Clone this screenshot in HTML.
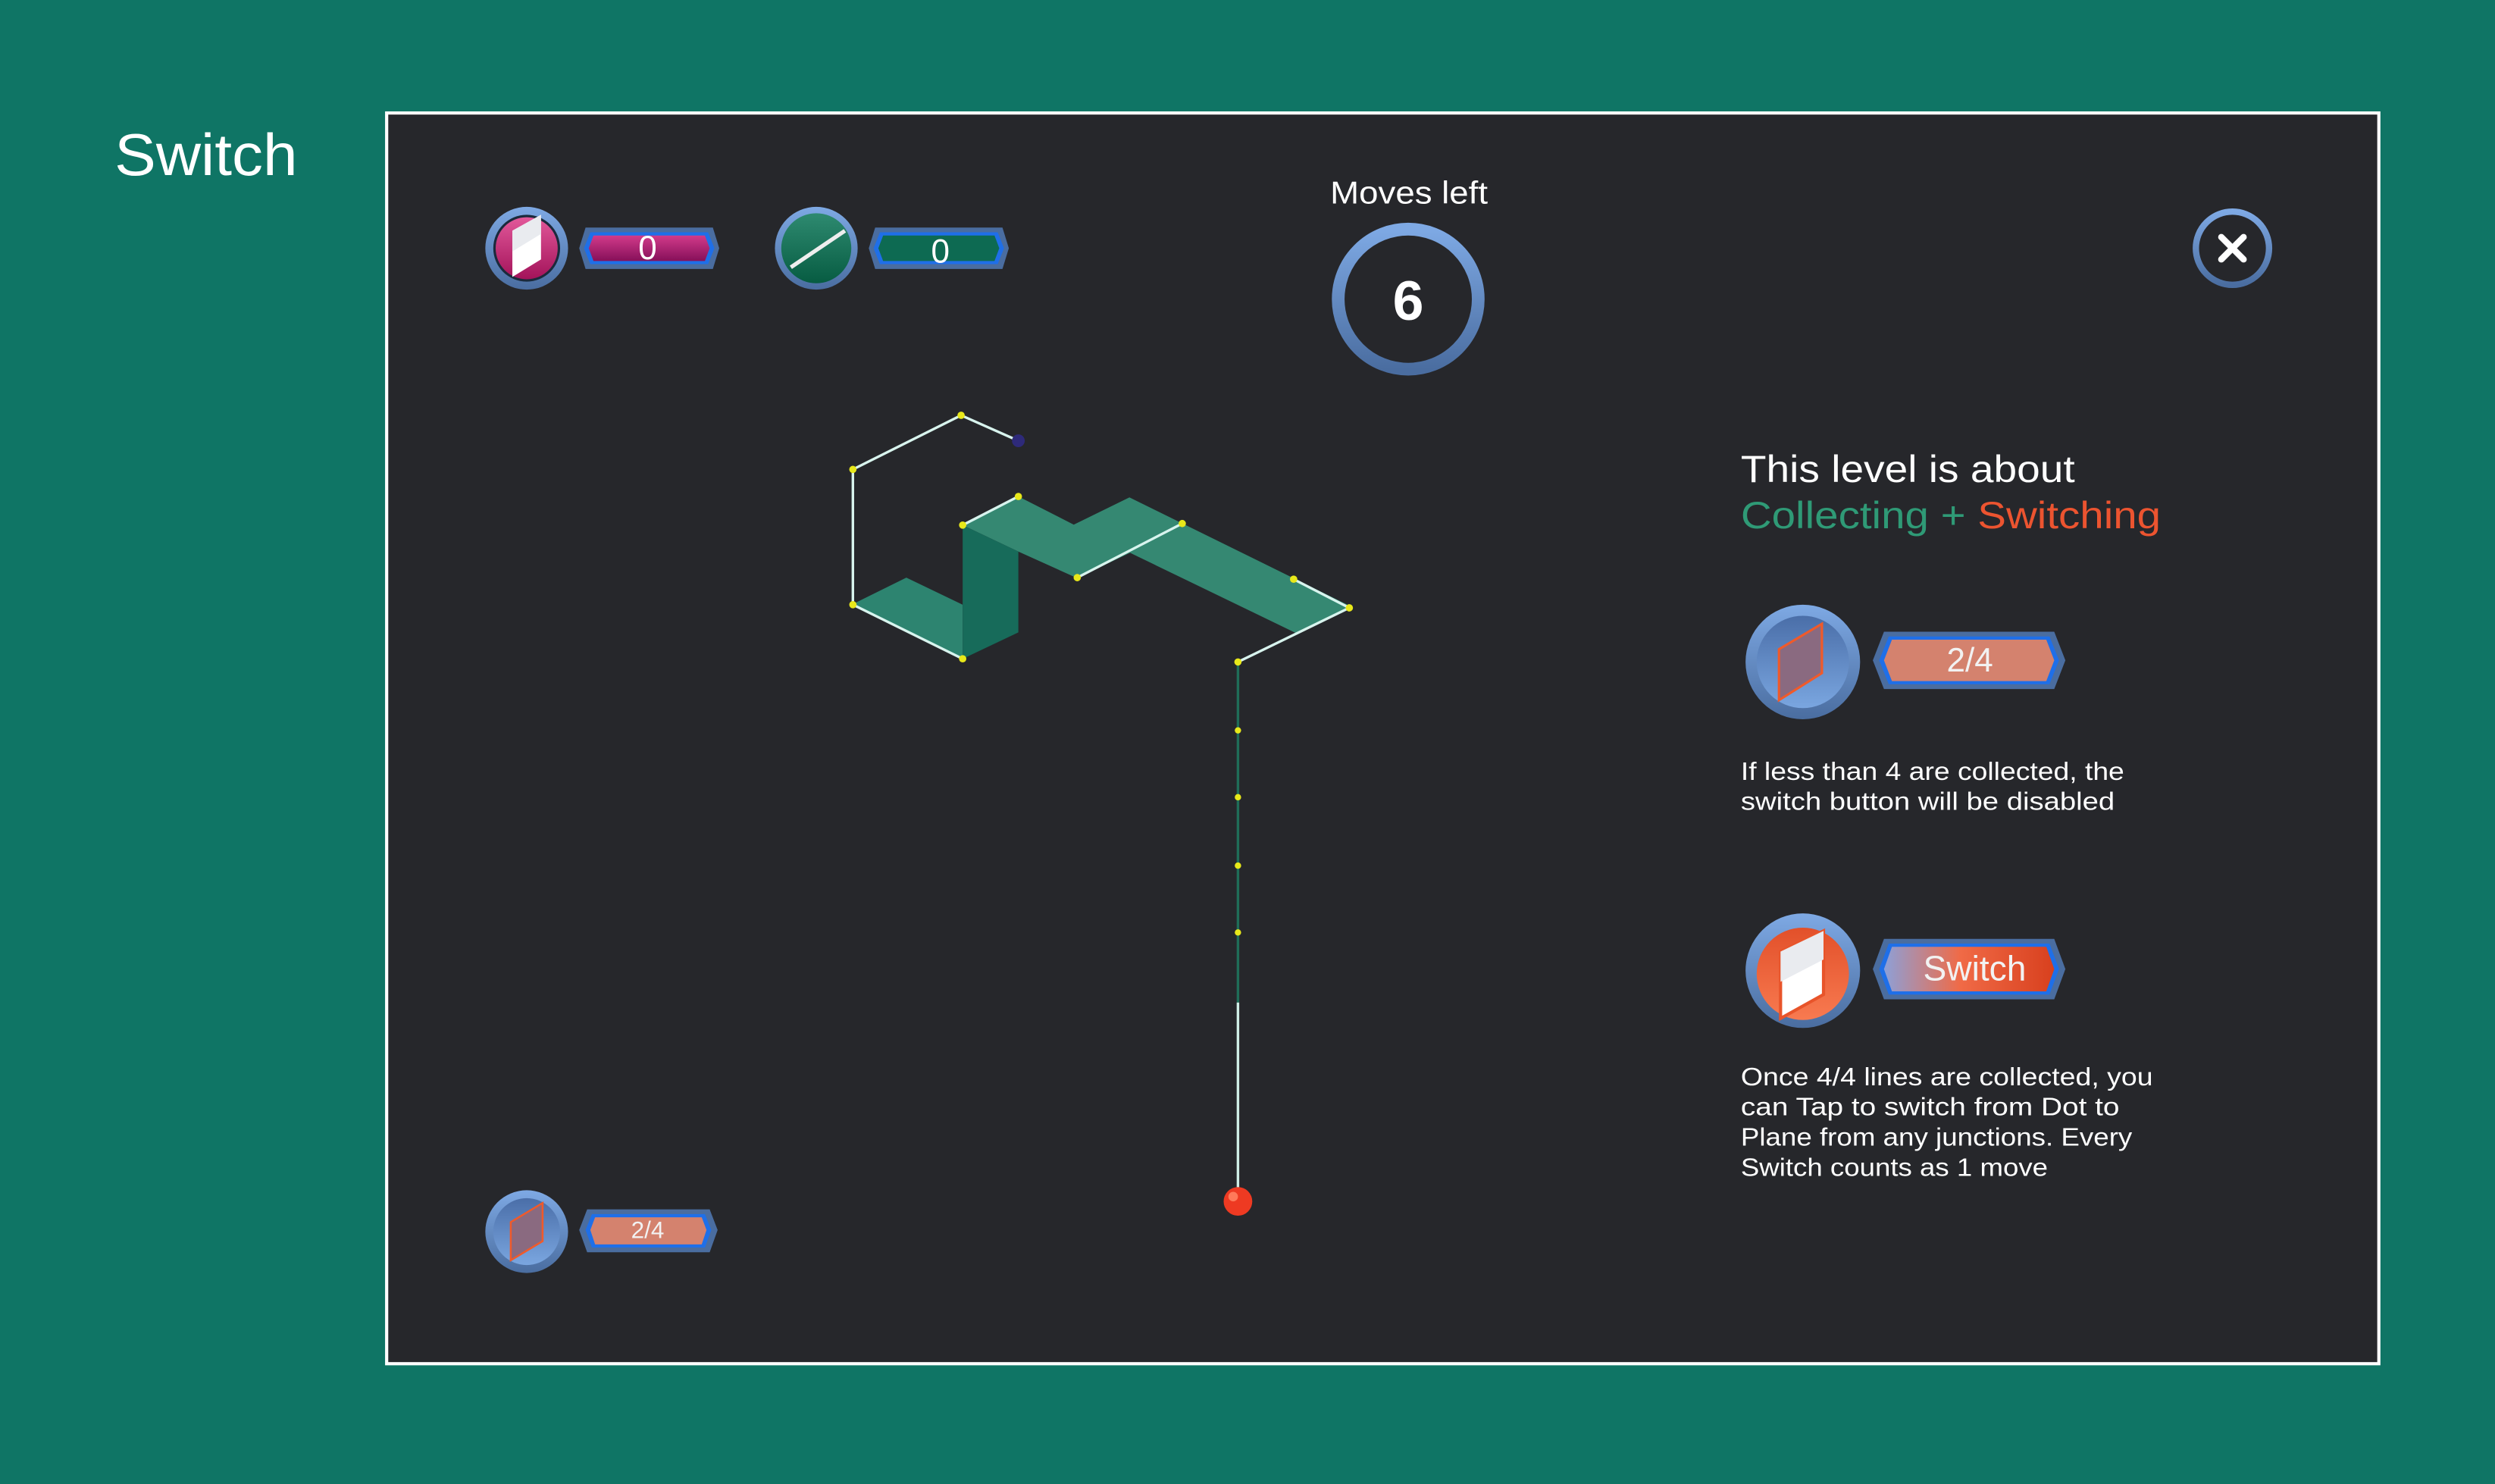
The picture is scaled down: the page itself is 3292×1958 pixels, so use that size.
<!DOCTYPE html>
<html><head><meta charset="utf-8"><style>
html,body{margin:0;padding:0;background:#0f7565;}
svg{display:block;}
text{font-family:"Liberation Sans",sans-serif;}
</style></head><body>
<svg width="3292" height="1958" viewBox="0 0 1568 932.6" preserveAspectRatio="none" xmlns="http://www.w3.org/2000/svg">
<defs>
<linearGradient id="ring" x1="0" y1="0" x2="0" y2="1"><stop offset="0" stop-color="#7ea9e4"/><stop offset="1" stop-color="#4a6da0"/></linearGradient>
<linearGradient id="pink" x1="0" y1="0" x2="0" y2="1"><stop offset="0" stop-color="#e2589a"/><stop offset="1" stop-color="#a3135a"/></linearGradient>
<linearGradient id="pinkb" x1="0" y1="0" x2="0" y2="1"><stop offset="0" stop-color="#d23a8a"/><stop offset="1" stop-color="#86105a"/></linearGradient>
<linearGradient id="green" x1="0" y1="0" x2="0" y2="1"><stop offset="0" stop-color="#2e8a70"/><stop offset="1" stop-color="#075c42"/></linearGradient>
<linearGradient id="blueI" x1="0" y1="0" x2="0" y2="1"><stop offset="0" stop-color="#4a6ea8"/><stop offset="1" stop-color="#7aa6e0"/></linearGradient>
<linearGradient id="orng" x1="0" y1="0" x2="0" y2="1"><stop offset="0" stop-color="#e2502a"/><stop offset="1" stop-color="#f87a50"/></linearGradient>
<linearGradient id="sw" x1="0" y1="0" x2="1" y2="0"><stop offset="0" stop-color="#8da0d8"/><stop offset="0.45" stop-color="#f06a46"/><stop offset="1" stop-color="#d8401e"/></linearGradient>
</defs>
<rect x="0" y="0" width="1568" height="933" fill="#0f7565"/>
<text x="72" y="110" font-size="37" fill="#fff" textLength="115" lengthAdjust="spacingAndGlyphs">Switch</text>
<rect x="243" y="71" width="1252" height="786" fill="#26272b" stroke="#fff" stroke-width="2"/>

<circle cx="331" cy="156" r="26" fill="url(#ring)"/>
<circle cx="331" cy="156" r="21" fill="#1b2a3c"/>
<circle cx="331" cy="156" r="19.5" fill="url(#pink)"/>
<polygon points="322,145 340,135 340,163 322,174" fill="#fff"/>
<polygon points="322,145 340,135 340,147 322,158" fill="#e9ebef"/>
<g>
<polygon points="368,143 448,143 452,156 448,169 368,169 364,156" fill="#4a6da0"/>
<polygon points="371,146 445,146 449,156 445,166 371,166 367,156" fill="#1f6fe8"/>
<polygon points="373,148 443,148 446,156 443,164 373,164 370,156" fill="url(#pinkb)"/>
<text x="407" y="163" font-size="21" fill="#fff" text-anchor="middle">0</text>
</g>
<circle cx="513" cy="156" r="26" fill="url(#ring)"/>
<circle cx="513" cy="156" r="22" fill="url(#green)"/>
<line x1="497" y1="168" x2="531" y2="145" stroke="#eee" stroke-width="2.5"/>
<g>
<polygon points="550,143 630,143 634,156 630,169 550,169 546,156" fill="#4a6da0"/>
<polygon points="553,146 627,146 631,156 627,166 553,166 549,156" fill="#1f6fe8"/>
<polygon points="555,148 625,148 628,156 625,164 555,164 552,156" fill="#0d6a52"/>
<text x="591" y="165" font-size="21" fill="#fff" text-anchor="middle">0</text>
</g>

<text x="836" y="128" font-size="20" fill="#fff" textLength="99" lengthAdjust="spacingAndGlyphs">Moves left</text>
<circle cx="885" cy="188" r="44" fill="none" stroke="url(#ring)" stroke-width="8"/>
<text x="885" y="201" font-size="35" font-weight="bold" fill="#fff" text-anchor="middle">6</text>

<circle cx="1403" cy="156" r="23" fill="#26272b" stroke="url(#ring)" stroke-width="4"/>
<path d="M1396 149 L1410 163 M1410 149 L1396 163" stroke="#fff" stroke-width="4" stroke-linecap="round"/>

<polygon points="535.2,380 569.6,363 605,380 605,414" fill="#2d8470"/>
<polygon points="605,330 640,312 674.8,329.7 709.8,312.6 849.8,381.5 814.3,397.8 710.2,347.4 676.9,363.3 640,346.6" fill="#358872"/>
<polygon points="605,330 640,346.6 640,397.4 605,414" fill="#176b5a"/>
<g stroke="#d8f4ee" stroke-width="1.6" fill="none">
<polyline points="640,277 604,261 536,295 536,380 605,414"/>
<line x1="605" y1="330" x2="640" y2="312"/>
<line x1="677" y1="363" x2="743" y2="329"/>
<line x1="813" y1="364" x2="848" y2="382"/>
<line x1="848" y1="382" x2="778" y2="416"/>
</g>
<line x1="778" y1="416" x2="778" y2="630" stroke="#1f6d58" stroke-width="1.6"/>
<line x1="778" y1="630" x2="778" y2="748" stroke="#cfeee6" stroke-width="1.6"/>
<g fill="#e8e81a">
<circle cx="604" cy="261" r="2.3"/><circle cx="536" cy="295" r="2.3"/><circle cx="536" cy="380" r="2.3"/><circle cx="605" cy="414" r="2.3"/>
<circle cx="605" cy="330" r="2.3"/><circle cx="640" cy="312" r="2.3"/><circle cx="677" cy="363" r="2.3"/><circle cx="743" cy="329" r="2.3"/>
<circle cx="813" cy="364" r="2.3"/><circle cx="848" cy="382" r="2.3"/><circle cx="778" cy="416" r="2.3"/>
<circle cx="778" cy="459" r="2"/><circle cx="778" cy="501" r="2"/><circle cx="778" cy="544" r="2"/><circle cx="778" cy="586" r="2"/>
</g>
<circle cx="640" cy="277" r="4" fill="#2e2a7a"/>
<circle cx="778" cy="755" r="9" fill="#ee3a22"/>
<circle cx="775" cy="752" r="3" fill="#ff7a5a"/>

<text x="1094" y="303" font-size="24" fill="#fff" textLength="210" lengthAdjust="spacingAndGlyphs">This level is about</text>
<text x="1094" y="332" font-size="24" textLength="264" lengthAdjust="spacingAndGlyphs"><tspan fill="#2f9a76">Collecting + </tspan><tspan fill="#ec5430">Switching</tspan></text>

<circle cx="1133" cy="416" r="36" fill="url(#ring)"/>
<circle cx="1133" cy="416" r="29" fill="url(#blueI)"/>
<polygon points="1118,408 1145,392 1145,423 1118,440" fill="#8a6a80" stroke="#f05a2a" stroke-width="1.5"/>
<g>
<polygon points="1184,397 1291,397 1298,415 1291,433 1184,433 1177,415" fill="#4a6da0"/>
<polygon points="1187,400 1288,400 1294,415 1288,430 1187,430 1181,415" fill="#1f6fe8"/>
<polygon points="1189,402 1286,402 1291,415 1286,428 1189,428 1184,415" fill="#d4826e"/>
<text x="1238" y="422" font-size="21" fill="#f2f2f2" text-anchor="middle">2/4</text>
</g>
<text x="1094" y="490" font-size="16" fill="#fff" textLength="241" lengthAdjust="spacingAndGlyphs">If less than 4 are collected, the</text>
<text x="1094" y="509" font-size="16" fill="#fff" textLength="235" lengthAdjust="spacingAndGlyphs">switch button will be disabled</text>

<circle cx="1133" cy="610" r="36" fill="url(#ring)"/>
<circle cx="1133" cy="612" r="29" fill="url(#orng)"/>
<polygon points="1119,598 1146,585 1146,625 1119,640" fill="#fff" stroke="#e8542a" stroke-width="2"/>
<polygon points="1119,598 1146,585 1146,603 1119,617" fill="#e9ebef"/>
<g>
<polygon points="1184,590 1291,590 1298,609 1291,628 1184,628 1177,609" fill="#4a6da0"/>
<polygon points="1187,593 1288,593 1294,609 1288,625 1187,625 1181,609" fill="#1f6fe8"/>
<polygon points="1189,595 1286,595 1291,609 1286,623 1189,623 1184,609" fill="url(#sw)"/>
<text x="1241" y="616" font-size="22" fill="#f2f2f2" text-anchor="middle">Switch</text>
</g>
<text x="1094" y="682" font-size="16" fill="#fff" textLength="259" lengthAdjust="spacingAndGlyphs">Once 4/4 lines are collected, you</text>
<text x="1094" y="701" font-size="16" fill="#fff" textLength="238" lengthAdjust="spacingAndGlyphs">can Tap to switch  from Dot to</text>
<text x="1094" y="720" font-size="16" fill="#fff" textLength="246" lengthAdjust="spacingAndGlyphs">Plane from any junctions. Every</text>
<text x="1094" y="739" font-size="16" fill="#fff" textLength="193" lengthAdjust="spacingAndGlyphs">Switch counts as 1 move</text>

<circle cx="331" cy="774" r="26" fill="url(#ring)"/>
<circle cx="331" cy="774" r="21" fill="url(#blueI)"/>
<polygon points="321,768 341,756 341,780 321,792" fill="#8a6a80" stroke="#f05a2a" stroke-width="1.2"/>
<g>
<polygon points="369,760 446,760 451,773 446,787 369,787 364,773" fill="#4a6da0"/>
<polygon points="372,763 443,763 447,773 443,784 372,784 368,773" fill="#1f6fe8"/>
<polygon points="374,765 441,765 444,773 441,782 374,782 371,773" fill="#d4826e"/>
<text x="407" y="778" font-size="15" fill="#f2f2f2" text-anchor="middle">2/4</text>
</g>
</svg>
</body></html>
